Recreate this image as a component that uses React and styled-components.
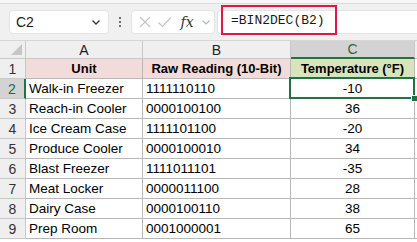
import React from "react";
import styled, { createGlobalStyle } from "styled-components";

const Global = createGlobalStyle`
  html, body { margin: 0; padding: 0; background: #ffffff; }
  body { font-family: "Liberation Sans", Arial, sans-serif; width: 417px; height: 242px; overflow: hidden; }
`;

const Page = styled.div`
  width: 417px;
  height: 242px;
  display: flex;
  flex-direction: column;
  overflow: hidden;
  background: #fff;
`;

const Toolbar = styled.div`
  height: 41px;
  flex: none;
  box-sizing: border-box;
  background: #f0f0f0;
  border-top: 3px solid #f7f7f7;
  border-bottom: 1px solid #d6d6d6;
  display: flex;
  align-items: center;
  padding-left: 9px;
  box-shadow: inset 0 1px 0 #dcdcdc;
`;

const NameBox = styled.div`
  width: 100px;
  height: 24px;
  box-sizing: border-box;
  background: #fff;
  border: 1px solid #e3e3e3;
  border-radius: 4px;
  display: flex;
  align-items: center;
  justify-content: space-between;
  padding: 0 6px 0 6px;
  font-size: 14px;
  color: #1a1a1a;
`;

const Dots = styled.div`
  width: 22px;
  display: flex;
  flex-direction: column;
  align-items: center;
  gap: 2px;
  & > span {
    width: 2px;
    height: 2px;
    background: #444;
    border-radius: 1px;
  }
`;

const FxBox = styled.div`
  width: 84px;
  height: 24px;
  box-sizing: border-box;
  background: #fff;
  border: 1px solid #e3e3e3;
  border-radius: 4px;
  display: flex;
  align-items: center;
  padding-left: 6px;
  gap: 5px;
`;

const FxLabel = styled.span`
  font-family: "DejaVu Serif", "Liberation Serif", serif;
  font-style: italic;
  font-size: 14px;
  color: #333;
  width: 18px;
  text-align: center;
`;

const FormulaBox = styled.div`
  flex: 1;
  height: 24px;
  margin-left: 2px;
  box-sizing: border-box;
  background: #fff;
  border: 1px solid #e3e3e3;
  border-right: none;
  border-radius: 4px 0 0 4px;
  display: flex;
  align-items: center;
  padding-left: 3px;
`;

const Highlight = styled.span`
  display: inline-flex;
  align-items: center;
  height: 30px;
  box-sizing: border-box;
  border: 2.5px solid #e0184a;
  padding: 0 8px 0 8px;
  margin-top: -3px;
  font-family: "Liberation Mono", "DejaVu Sans Mono", monospace;
  font-size: 13px;
  color: #1a1a1a;
  width: 116px;
`;

const Grid = styled.div`
  display: grid;
  grid-template-columns: 26px 117px 148px 124px 1fr;
  grid-auto-rows: 20px;
  grid-template-rows: 18px;
  font-size: 13.5px;
  color: #000;
`;

const Cell = styled.div`
  box-sizing: border-box;
  border-right: 1px solid #b8b8b8;
  border-bottom: 1px solid #b8b8b8;
  display: flex;
  align-items: center;
  justify-content: ${(p) => (p.$align === "center" ? "center" : "flex-start")};
  padding-left: ${(p) => (p.$align === "center" ? "0" : "3px")};
  white-space: nowrap;
  overflow: ${(p) => (p.$active ? "visible" : "hidden")};
  background: ${(p) => p.$bg || "#fff"};
  font-weight: ${(p) => (p.$bold ? 700 : 400)};
  font-size: ${(p) => (p.$bold ? "13px" : "inherit")};
  position: relative;
`;

const ColHead = styled(Cell)`
  background: ${(p) => (p.$sel ? "#d3d3d3" : "#efefef")};
  color: ${(p) => (p.$sel ? "#1d6b40" : "#222")};
  border-right: 1px solid #c8c8c8;
  border-bottom: ${(p) => (p.$sel ? "2px solid #217346" : "1px solid #c8c8c8")};
  justify-content: center;
  padding: 0;
  font-size: 14px;
`;

const RowHead = styled(Cell)`
  background: ${(p) => (p.$sel ? "#d3d3d3" : "#efefef")};
  color: ${(p) => (p.$sel ? "#1d6b40" : "#333")};
  border-right: ${(p) => (p.$sel ? "2px solid #217346" : "1px solid #c8c8c8")};
  border-bottom: 1px solid #c8c8c8;
  justify-content: center;
  padding: 0;
  font-size: 14px;
`;

const Corner = styled(Cell)`
  background: #efefef;
  border-right: 1px solid #c8c8c8;
  border-bottom: 1px solid #c8c8c8;
`;

const CornerTri = styled.div`
  position: absolute;
  right: 3px;
  bottom: 3px;
  width: 0;
  height: 0;
  border-left: 11px solid transparent;
  border-bottom: 11px solid #c6c6c6;
`;

const Selected = styled.div`
  position: absolute;
  z-index: 2;
  left: -2px;
  top: -2px;
  right: -1px;
  bottom: -1px;
  border: 2px solid #217346;
  pointer-events: none;
`;

const Handle = styled.div`
  position: absolute;
  right: -5px;
  bottom: -5px;
  width: 5px;
  height: 5px;
  background: #217346;
  border: 1px solid #fff;
`;

const Icon = ({ children, w = 14, h = 14 }) => (
  <svg width={w} height={h} viewBox={`0 0 ${w} ${h}`} fill="none">
    {children}
  </svg>
);

const rows = [
  ["Walk-in Freezer", "1111110110", "-10"],
  ["Reach-in Cooler", "0000100100", "36"],
  ["Ice Cream Case", "1111101100", "-20"],
  ["Produce Cooler", "0000100010", "34"],
  ["Blast Freezer", "1111011101", "-35"],
  ["Meat Locker", "0000011100", "28"],
  ["Dairy Case", "0000100110", "38"],
  ["Prep Room", "0001000001", "65"],
];

export default function App() {
  return (
    <Page>
      <Global />
      <Toolbar>
        <NameBox>
          <span>C2</span>
          <Icon w={12} h={12}>
            <path d="M2.5 4.5 L6 8 L9.5 4.5" stroke="#333" strokeWidth="1.3" />
          </Icon>
        </NameBox>
        <Dots>
          <span />
          <span />
          <span />
        </Dots>
        <FxBox>
          <Icon w={14} h={14}>
            <path d="M2 2 L12 12 M12 2 L2 12" stroke="#c2c2c2" strokeWidth="1.1" />
          </Icon>
          <Icon w={16} h={14}>
            <path d="M1.5 7.5 L5.5 11.5 L14 2.5" stroke="#c2c2c2" strokeWidth="1.1" />
          </Icon>
          <FxLabel>fx</FxLabel>
          <Icon w={10} h={12}>
            <path d="M1.5 4.5 L5 8 L8.5 4.5" stroke="#b5b5b5" strokeWidth="1.1" />
          </Icon>
        </FxBox>
        <FormulaBox>
          <Highlight>=BIN2DEC(B2)</Highlight>
        </FormulaBox>
      </Toolbar>
      <Grid>
        <Corner>
          <CornerTri />
        </Corner>
        <ColHead>A</ColHead>
        <ColHead>B</ColHead>
        <ColHead $sel>C</ColHead>
        <ColHead />

        <RowHead>1</RowHead>
        <Cell $bg="#f2dcdb" $bold $align="center">Unit</Cell>
        <Cell $bg="#f2dcdb" $bold $align="center">Raw Reading (10-Bit)</Cell>
        <Cell $bg="#d8e4bc" $bold $align="center">Temperature (°F)</Cell>
        <Cell />

        {rows.map((r, i) => (
          <React.Fragment key={i}>
            <RowHead $sel={i === 0}>{i + 2}</RowHead>
            <Cell>{r[0]}</Cell>
            <Cell>{r[1]}</Cell>
            <Cell $align="center" $active={i === 0}>
              {r[2]}
              {i === 0 && (
                <Selected>
                  <Handle />
                </Selected>
              )}
            </Cell>
            <Cell />
          </React.Fragment>
        ))}
      </Grid>
    </Page>
  );
}
